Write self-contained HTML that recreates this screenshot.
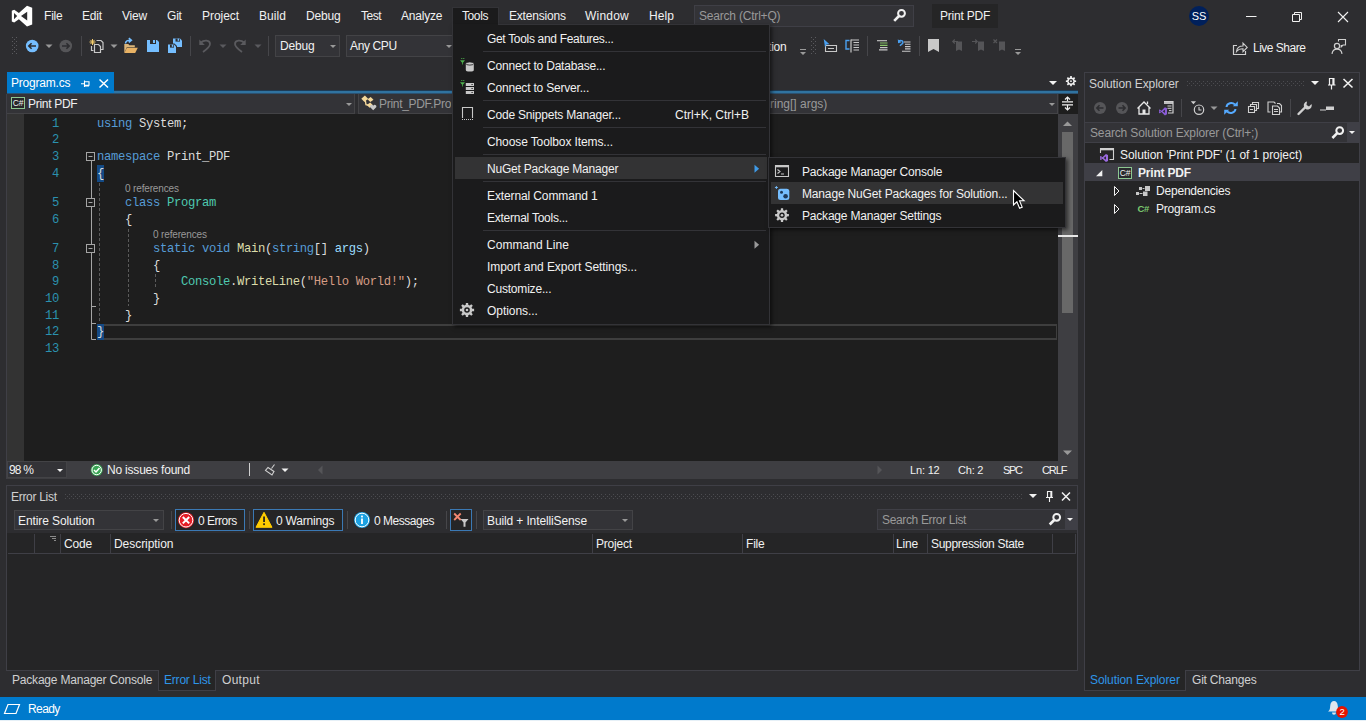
<!DOCTYPE html>
<html><head><meta charset="utf-8"><title>Print PDF - Microsoft Visual Studio</title>
<style>
*{box-sizing:border-box;margin:0;padding:0}
html,body{width:1366px;height:721px;overflow:hidden;background:#2d2d30}
body{position:relative;font-family:"Liberation Sans",sans-serif;font-size:12px;color:#f1f1f1;letter-spacing:-0.2px}
.a{position:absolute}
.t{position:absolute;white-space:nowrap;line-height:16px;height:16px}
svg{position:absolute;overflow:visible}
.mi{position:absolute;top:8px;height:16px;line-height:16px;white-space:nowrap}
.g{color:#999}
.code{position:absolute;font-family:"Liberation Mono",monospace;font-size:12.2px;letter-spacing:-0.32px;line-height:16px;height:16px;white-space:pre;color:#dcdcdc;left:97px}
.ln{position:absolute;font-family:"Liberation Mono",monospace;font-size:12.2px;letter-spacing:-0.32px;line-height:16px;height:16px;width:40px;text-align:right;color:#2b91af;left:19px}
.k{color:#569cd6}.ty{color:#4ec9b0}.s{color:#d69d85}.m{color:#dcdcaa}.p{color:#9cdcfe}
.ref{position:absolute;font-size:10px;line-height:12px;height:12px;color:#999;white-space:nowrap;letter-spacing:-0.15px}
.combo{position:absolute;background:#333337;border:1px solid #434346}
.sep{position:absolute;width:1px;background:#46464a}
.pop{position:absolute;background:#1b1b1c;border:1px solid #333337;box-shadow:2px 2px 4px rgba(0,0,0,.55)}
.pi{position:absolute;left:33px;height:22px;line-height:22px;white-space:nowrap}
.ps{position:absolute;left:29px;right:3px;height:1px;background:#333337}
#toolsmenu>*{margin-top:1px}#toolsmenu .pi{left:34px}#toolsmenu .ps{left:30px}
.hl{position:absolute;background:#333334}
.dd{position:absolute;width:0;height:0;border-left:3px solid transparent;border-right:3px solid transparent;border-top:3px solid #999}
.ddw{border-top-color:#f1f1f1}
.grip{position:absolute;height:5px;background-image:radial-gradient(circle,#46464a 0.6px,transparent 0.9px);background-size:4px 4px}
.th{position:absolute;top:535px;height:19px;line-height:19px;white-space:nowrap}
.cd{position:absolute;top:534px;height:19px;width:1px;background:#3f3f46}
</style></head><body>

<!-- ===== title / menu bar ===== -->
<div id="menubar">
<span class="mi" style="left:44px">File</span>
<span class="mi" style="left:82px">Edit</span>
<span class="mi" style="left:122px">View</span>
<span class="mi" style="left:167px">Git</span>
<span class="mi" style="left:202px;letter-spacing:-0.05px">Project</span>
<span class="mi" style="left:259px;letter-spacing:0.06px">Build</span>
<span class="mi" style="left:306px">Debug</span>
<span class="mi" style="left:361px;letter-spacing:-0.5px">Test</span>
<span class="mi" style="left:401px">Analyze</span>
<span class="mi" style="left:509px">Extensions</span>
<span class="mi" style="left:585px;letter-spacing:0.2px">Window</span>
<span class="mi" style="left:649px;letter-spacing:0.07px">Help</span>
</div>
<!-- search -->
<div class="a" style="left:694px;top:5px;width:220px;height:22px;background:#333337;border:1px solid #3f3f46"></div>
<span class="t g" style="left:699px;top:8px">Search (Ctrl+Q)</span>
<!-- solution name -->
<div class="a" style="left:932px;top:4px;width:66px;height:24px;background:#252526"></div>
<span class="t" style="left:940px;top:8px">Print PDF</span>
<!-- avatar -->
<div class="a" style="left:1189px;top:6px;width:20px;height:20px;border-radius:50%;background:#00205b"></div>
<span class="t" style="left:1190px;top:8px;width:18px;text-align:center;color:#fff;font-size:11px;letter-spacing:0">SS</span>

<!-- ===== toolbar ===== -->
<div class="combo" style="left:275px;top:35px;width:65px;height:22px"></div>
<span class="t" style="left:280px;top:38px">Debug</span>
<div class="dd" style="left:330px;top:45px"></div>
<div class="combo" style="left:346px;top:35px;width:112px;height:22px"></div>
<span class="t" style="left:350px;top:38px;letter-spacing:-0.37px">Any CPU</span>
<div class="dd" style="left:446px;top:45px"></div>
<span class="t" style="left:768px;top:39px">tion</span>
<span class="t" style="left:1253px;top:40px;letter-spacing:-0.5px">Live Share</span>

<!-- ===== document well ===== -->
<div class="a" style="left:7px;top:90px;width:1071px;height:4px;background:linear-gradient(#1d3c56 0,#1d3c56 1px,#3073a0 1px,#3073a0 3px,#2c5170 3px)"></div>
<div class="a" style="left:7px;top:72px;width:107px;height:21px;background:#007acc"></div>
<span class="t" style="left:11px;top:75px;color:#fff">Program.cs</span>
<div class="dd ddw" style="left:1049px;top:81px;border-left-width:4px;border-right-width:4px;border-top-width:4px"></div>

<!-- nav bar -->
<div class="a" style="left:7px;top:94px;width:348px;height:20px;background:#333337;border:1px solid #434346;border-top:none;border-left:none"></div>
<div class="a" style="left:358px;top:94px;width:700px;height:20px;background:#333337;border:1px solid #434346;border-top:none"></div>
<span class="t" style="left:28px;top:96px;letter-spacing:-0.3px">Print PDF</span>
<span class="t g" style="left:379px;top:96px;letter-spacing:-0.3px;width:72px;overflow:hidden">Print_PDF.Program</span>
<span class="t g" style="left:770px;top:96px;letter-spacing:0">ring[] args)</span>
<div class="dd" style="left:346px;top:103px"></div>
<div class="dd" style="left:1049px;top:103px"></div>
<div class="a" style="left:1059px;top:94px;width:19px;height:20px;background:#1e1e1e"></div>

<!-- ===== editor ===== -->
<div class="a" style="left:6px;top:94px;width:1px;height:385px;background:#3f3f46"></div>
<div class="a" style="left:7px;top:114px;width:1051px;height:347px;background:#1e1e1e"></div>
<div class="a" style="left:7px;top:114px;width:17px;height:347px;background:#333333"></div>
<!-- current line -->
<div class="a" style="left:97px;top:324px;width:960px;height:16px;border:2px solid #3e3e3e;border-left:none;border-right-width:1px"></div>
<!-- brace highlights -->
<div class="a" style="left:97px;top:165px;width:7px;height:17px;background:#144a85"></div>
<div class="a" style="left:97px;top:324px;width:7px;height:16px;background:#144a85"></div>

<span class="ln" style="top:116px">1</span>
<span class="ln" style="top:132px">2</span>
<span class="ln" style="top:149px">3</span>
<span class="ln" style="top:166px">4</span>
<span class="ln" style="top:195px">5</span>
<span class="ln" style="top:212px">6</span>
<span class="ln" style="top:241px">7</span>
<span class="ln" style="top:258px">8</span>
<span class="ln" style="top:274px">9</span>
<span class="ln" style="top:291px">10</span>
<span class="ln" style="top:308px">11</span>
<span class="ln" style="top:324px">12</span>
<span class="ln" style="top:341px">13</span>

<span class="code" style="top:116px"><span class="k">using</span> System;</span>
<span class="code" style="top:149px"><span class="k">namespace</span> Print_PDF</span>
<span class="code" style="top:166px">{</span>
<span class="ref" style="left:125px;top:183px">0 references</span>
<span class="code" style="top:195px">    <span class="k">class</span> <span class="ty">Program</span></span>
<span class="code" style="top:212px">    {</span>
<span class="ref" style="left:153px;top:229px">0 references</span>
<span class="code" style="top:241px">        <span class="k">static</span> <span class="k">void</span> <span class="m">Main</span>(<span class="k">string</span>[] <span class="p">args</span>)</span>
<span class="code" style="top:258px">        {</span>
<span class="code" style="top:274px">            <span class="ty">Console</span>.<span class="m">WriteLine</span>(<span class="s">"Hello World!"</span>);</span>
<span class="code" style="top:291px">        }</span>
<span class="code" style="top:308px">    }</span>
<span class="code" style="top:324px">}</span>

<!-- vertical scrollbar -->
<div class="a" style="left:1058px;top:114px;width:20px;height:347px;background:#3e3e42"></div>
<div class="a" style="left:1062px;top:132px;width:11px;height:181px;background:#686868"></div>
<div class="a" style="left:1058px;top:235px;width:20px;height:2px;background:#e8e8e8"></div>

<!-- editor bottom bar -->
<div class="a" style="left:7px;top:461px;width:1071px;height:18px;background:#3e3e42"></div>
<div class="a" style="left:7px;top:461px;width:60px;height:17px;background:#333337;border:1px solid #434346"></div>
<span class="t" style="left:9px;top:462px;letter-spacing:-0.8px">98 %</span>
<div class="dd ddw" style="left:57px;top:469px"></div>
<span class="t" style="left:107px;top:462px">No issues found</span>
<div class="a" style="left:249px;top:463px;width:1px;height:13px;background:#d0d0d0"></div>
<span class="t" style="left:910px;top:462px;font-size:11px;letter-spacing:-0.18px">Ln: 12</span>
<span class="t" style="left:958px;top:462px;font-size:11px;letter-spacing:-0.2px">Ch: 2</span>
<span class="t" style="left:1003px;top:462px;font-size:11px;letter-spacing:-1.3px">SPC</span>
<span class="t" style="left:1042px;top:462px;font-size:11px;letter-spacing:-1.1px">CRLF</span>

<!-- ===== error list ===== -->
<div class="a" style="left:6px;top:485px;width:1072px;height:186px;border:1px solid #3f3f46;background:#2d2d30"></div>
<span class="t" style="left:11px;top:489px;color:#d0d0d0;letter-spacing:-0.3px">Error List</span>
<div class="a" style="left:7px;top:533px;width:1070px;height:137px;background:#252526"></div>

<div class="dd ddw" style="left:1029px;top:494px;border-left-width:4px;border-right-width:4px;border-top-width:4px"></div>
<div class="combo" style="left:14px;top:510px;width:150px;height:20px"></div>
<span class="t" style="left:18px;top:513px;letter-spacing:-0.1px">Entire Solution</span>
<div class="dd" style="left:153px;top:519px"></div>
<div class="sep" style="left:171px;top:511px;height:18px"></div>
<div class="a" style="left:175px;top:509px;width:70px;height:22px;border:1px solid #3b79b4;background:#252526"></div>
<span class="t" style="left:198px;top:513px;letter-spacing:-0.5px">0 Errors</span>
<div class="sep" style="left:249px;top:511px;height:18px"></div>
<div class="a" style="left:253px;top:509px;width:90px;height:22px;border:1px solid #3b79b4;background:#252526"></div>
<span class="t" style="left:276px;top:513px">0 Warnings</span>
<div class="sep" style="left:347px;top:511px;height:18px"></div>
<span class="t" style="left:374px;top:513px;letter-spacing:-0.47px">0 Messages</span>
<div class="sep" style="left:446px;top:511px;height:18px"></div>
<div class="a" style="left:450px;top:509px;width:22px;height:22px;border:1px solid #3b79b4;background:#252526"></div>
<div class="sep" style="left:476px;top:511px;height:18px"></div>
<div class="combo" style="left:483px;top:510px;width:150px;height:20px"></div>
<span class="t" style="left:487px;top:513px;letter-spacing:-0.12px">Build + IntelliSense</span>
<div class="dd" style="left:622px;top:519px"></div>
<div class="combo" style="left:877px;top:509px;width:200px;height:21px;border-color:#3f3f46"></div>
<div class="a" style="left:1065px;top:510px;width:11px;height:19px;background:#3f3f46"></div>
<span class="t g" style="left:882px;top:512px;letter-spacing:-0.35px">Search Error List</span>
<div class="dd ddw" style="left:1067px;top:518px"></div>
<div class="a" style="left:8px;top:553px;width:1068px;height:1px;background:#3f3f46"></div>
<div class="cd" style="left:34px"></div><div class="cd" style="left:60px"></div><div class="cd" style="left:110px"></div>
<div class="cd" style="left:592px"></div><div class="cd" style="left:742px"></div><div class="cd" style="left:893px"></div>
<div class="cd" style="left:927px"></div><div class="cd" style="left:1052px"></div><div class="cd" style="left:1075px"></div>
<span class="th" style="left:64px">Code</span>
<span class="th" style="left:114px;letter-spacing:-0.05px">Description</span>
<span class="th" style="left:596px">Project</span>
<span class="th" style="left:746px">File</span>
<span class="th" style="left:896px">Line</span>
<span class="th" style="left:931px;letter-spacing:-0.3px">Suppression State</span>
<!-- bottom tabs -->
<span class="t" style="left:12px;top:672px;color:#d0d0d0">Package Manager Console</span>
<div class="a" style="left:158px;top:670px;width:58px;height:21px;background:#252526;border:1px solid #3f3f46;border-top:none"></div>
<span class="t" style="left:164px;top:672px;color:#2e95e8">Error List</span>
<span class="t" style="left:222px;top:672px;color:#d0d0d0;letter-spacing:0.3px">Output</span>

<!-- ===== solution explorer ===== -->
<div class="a" style="left:1084px;top:72px;width:276px;height:599px;border:1px solid #3f3f46;background:#252526"></div>
<div class="a" style="left:1085px;top:73px;width:274px;height:70px;background:#2d2d30"></div>
<span class="t" style="left:1089px;top:76px;color:#d0d0d0;letter-spacing:-0.1px">Solution Explorer</span>

<div class="dd ddw" style="left:1311px;top:81px;border-left-width:4px;border-right-width:4px;border-top-width:4px"></div>
<div class="sep" style="left:1181px;top:99px;height:18px"></div>
<div class="sep" style="left:1290px;top:99px;height:18px"></div>
<div class="a" style="left:1085px;top:122px;width:274px;height:21px;background:#333337;border:1px solid #3f3f46;border-left:none;border-right:none"></div>
<div class="a" style="left:1347px;top:123px;width:12px;height:19px;background:#3f3f46"></div>
<span class="t g" style="left:1090px;top:125px;letter-spacing:-0.15px">Search Solution Explorer (Ctrl+;)</span>
<div class="dd ddw" style="left:1349px;top:131px"></div>
<div class="a" style="left:1085px;top:163px;width:274px;height:18px;background:#3f3f46"></div>
<span class="t" style="left:1120px;top:147px;letter-spacing:-0.05px">Solution 'Print PDF' (1 of 1 project)</span>
<span class="t" style="left:1138px;top:165px;font-weight:bold">Print PDF</span>
<span class="t" style="left:1156px;top:183px">Dependencies</span>
<span class="t" style="left:1156px;top:201px">Program.cs</span>
<!-- sol tabs -->
<div class="a" style="left:1084px;top:670px;width:102px;height:21px;background:#252526;border:1px solid #3f3f46;border-top:none"></div>
<span class="t" style="left:1090px;top:672px;color:#2e95e8;letter-spacing:-0.09px">Solution Explorer</span>
<span class="t" style="left:1192px;top:672px;color:#d0d0d0">Git Changes</span>

<!-- status bar -->
<div class="a" style="left:0;top:697px;width:1366px;height:23px;background:#007acc"></div>
<div class="a" style="left:0;top:720px;width:1366px;height:1px;background:#e6f0f7"></div>
<span class="t" style="left:28px;top:701px;color:#fff;letter-spacing:-0.6px">Ready</span>

<!-- ===== icons layer 1 (below popups) ===== -->
<svg id="ic1" style="left:0;top:0" width="1366" height="721" viewBox="0 0 1366 721" fill="none">
<defs>
<pattern id="gp1" width="4" height="4" patternUnits="userSpaceOnUse" x="65" y="494"><rect x="0" y="0" width="1" height="1" fill="#4c4c50"/><rect x="2" y="2" width="1" height="1" fill="#4c4c50"/></pattern>
<pattern id="gp2" width="4" height="4" patternUnits="userSpaceOnUse" x="1187" y="81"><rect x="0" y="0" width="1" height="1" fill="#4c4c50"/><rect x="2" y="2" width="1" height="1" fill="#4c4c50"/></pattern>
</defs>
<rect x="65" y="494" width="957" height="5" fill="url(#gp1)"/>
<rect x="1187" y="81" width="117" height="5" fill="url(#gp2)"/>
<!-- VS logo -->
<path transform="translate(12 6)" fill="#fff" fill-rule="evenodd" d="M15 -0.200 L20.200 1.800 V18.400 L15 20.400 L6.900 13.300 L2.200 16.400 L-0.200 15.400 V4.800 L2.200 3.800 L6.900 6.900 Z M15.200 5.800 V14.400 L9 10.100 Z M2 7 V13.200 L5.200 10.100 Z"/>
<!-- toolbar grip -->
<g fill="#5a5a5e">
<rect x="12" y="37" width="1" height="1"/><rect x="12" y="41" width="1" height="1"/><rect x="12" y="45" width="1" height="1"/><rect x="12" y="49" width="1" height="1"/><rect x="12" y="53" width="1" height="1"/>
<rect x="14" y="39" width="1" height="1"/><rect x="14" y="43" width="1" height="1"/><rect x="14" y="47" width="1" height="1"/><rect x="14" y="51" width="1" height="1"/>
<rect x="16" y="37" width="1" height="1"/><rect x="16" y="41" width="1" height="1"/><rect x="16" y="45" width="1" height="1"/><rect x="16" y="49" width="1" height="1"/><rect x="16" y="53" width="1" height="1"/>
<rect x="811" y="37" width="1" height="1"/><rect x="811" y="41" width="1" height="1"/><rect x="811" y="45" width="1" height="1"/><rect x="811" y="49" width="1" height="1"/><rect x="811" y="53" width="1" height="1"/>
<rect x="813" y="39" width="1" height="1"/><rect x="813" y="43" width="1" height="1"/><rect x="813" y="47" width="1" height="1"/><rect x="813" y="51" width="1" height="1"/>
<rect x="815" y="37" width="1" height="1"/><rect x="815" y="41" width="1" height="1"/><rect x="815" y="45" width="1" height="1"/><rect x="815" y="49" width="1" height="1"/><rect x="815" y="53" width="1" height="1"/>
</g>
<!-- back / forward -->
<circle cx="32.2" cy="46" r="6.3" fill="#75beff"/>
<path d="M36 46 H29 M31.6 43.2 L28.8 46 L31.6 48.8" stroke="#2d2d30" stroke-width="1.6"/>
<path d="M45.5 44.5 h7 l-3.5 3.5 z" fill="#999"/>
<circle cx="65.8" cy="46" r="6.3" fill="#555558"/>
<path d="M62 46 H69 M66.4 43.2 L69.2 46 L66.4 48.8" stroke="#2d2d30" stroke-width="1.6"/>
<rect x="81" y="36" width="1" height="20" fill="#46464a"/>
<!-- new item -->
<path d="M96.5 40.5 h4.5 l2 2 v7 h-2" stroke="#c8c8c8" stroke-width="1.2"/>
<path d="M94.5 44.5 h4 l2 2 v6 h-6 z" stroke="#c8c8c8" stroke-width="1.2"/>
<path d="M91.5 46 v4.5 h2" stroke="#c8c8c8" stroke-width="1.2"/>
<path d="M92.5 39 v6 M89.5 42 h6 M90.4 39.9 l4.2 4.2 M94.6 39.9 l-4.2 4.2" stroke="#f5cd6c" stroke-width="1"/>
<path d="M110.5 44.5 h7 l-3.5 3.5 z" fill="#999"/>
<!-- open -->
<path d="M124.3 53 V44 h4 l1 1.2 h5.5 v2 h-8 l-2.5 5.8 z" fill="#dcb67a"/>
<path d="M124.3 53 l2.6 -5.3 h10.9 l-2.6 5.3 z" fill="#e8b264"/>
<path d="M125.5 43.5 c0 -2.5 2 -3.2 5 -3.2 M128.8 38.2 l2.6 2.1 l-2.6 2.1" stroke="#75beff" stroke-width="1.5"/>
<!-- save -->
<path d="M147 40 h10 l2 2 v10 h-12 z" fill="#75beff"/>
<rect x="150" y="40" width="6" height="4" fill="#2d2d30"/><rect x="153" y="40" width="2" height="3" fill="#75beff"/>
<!-- save all -->
<path d="M173 38.6 h7 l2 2 v6.4 h-9 z" fill="#75beff"/>
<rect x="175.5" y="38.6" width="4.5" height="3" fill="#2d2d30"/><rect x="177.6" y="38.6" width="1.6" height="2.2" fill="#75beff"/>
<path d="M167 43.6 h7.5 l2.5 2.5 v7 h-10 z" fill="#2d2d30"/>
<path d="M168 44.6 h6 l2 2 v6.4 h-8 z" fill="#75beff"/>
<rect x="170" y="44.6" width="4" height="3" fill="#2d2d30"/><rect x="171.8" y="44.6" width="1.5" height="2.2" fill="#75beff"/>
<rect x="190" y="36" width="1" height="20" fill="#46464a"/>
<!-- undo / redo -->
<path d="M203 52 c3.5 -2.5 7 -5 7 -8 c0 -4 -6 -4.5 -9 -1.5" stroke="#5a5a5e" stroke-width="1.8"/>
<path d="M199.3 39.5 v5.5 h5.5 z" fill="#5a5a5e"/>
<path d="M219.5 44.5 h7 l-3.5 3.5 z" fill="#5a5a5e"/>
<path d="M242 52 c-3.5 -2.5 -7 -5 -7 -8 c0 -4 6 -4.5 9 -1.5" stroke="#5a5a5e" stroke-width="1.8"/>
<path d="M245.7 39.5 v5.5 h-5.5 z" fill="#5a5a5e"/>
<path d="M254.5 44.5 h7 l-3.5 3.5 z" fill="#5a5a5e"/>
<rect x="268" y="36" width="1" height="20" fill="#46464a"/>
<!-- overflow arrows -->
<path d="M800 49 h6 v1 h-6z M800 52 h6 l-3 3 z" fill="#999"/>
<path d="M1015 49 h6 v1 h-6z M1015 52 h6 l-3 3 z" fill="#999"/>
<!-- cursor + box -->
<path d="M825.5 45.5 h11 v6 h-11 z M828 48.5 h6" stroke="#c8c8c8" stroke-width="1.1"/>
<path d="M823.7 39 l5.8 5.3 l-3 .3 l-1.4 2.8 z" fill="#4aa0f0"/>
<!-- format doc -->
<path d="M849.5 40.5 h-3.5 v8.5 h3.5" stroke="#4aa0f0" stroke-width="1.4"/>
<path d="M851 39.5 v13" stroke="#c8c8c8" stroke-width="1.2"/>
<path d="M851 40 h8 M853.5 42.5 h5.5 M853.5 45 h5.5 M853.5 47.5 h5.5 M853.5 50 h5.5" stroke="#c8c8c8" stroke-width="1.1"/>
<rect x="867" y="36" width="1" height="20" fill="#46464a"/>
<!-- comment -->
<path d="M877 40.7 h10" stroke="#c8c8c8" stroke-width="1.1"/>
<path d="M880 43 h7.5 M880 45.3 h7.5" stroke="#8bc56a" stroke-width="1.2"/>
<path d="M880 47.6 h7.5 M879 49.9 h8.5" stroke="#c8c8c8" stroke-width="1.1"/>
<!-- uncomment -->
<path d="M898.5 41 c3 -1.500 5.500 0.500 4 2.600 l-2.600 2.200" stroke="#4aa0f0" stroke-width="1.5"/>
<path d="M897.800 39.300 l0.300 4 l3.500 -1 z" fill="#4aa0f0"/>
<path d="M904 42 h6.500 M905 44.300 h5.500 M905 46.600 h5.500 M905 48.900 h5.500 M902 51.200 h8.500" stroke="#c8c8c8" stroke-width="1.1"/>
<rect x="919" y="36" width="1" height="20" fill="#46464a"/>
<!-- bookmarks -->
<path d="M928 39 h11 v13 l-5.500 -3 l-5.500 3 z" fill="#c8c8c8"/>
<g fill="#555558">
<path d="M956 41.500 h6 v9.500 l-3 -1.600 l-3 1.600 z"/>
<path d="M978 41.500 h6 v9.500 l-3 -1.600 l-3 1.600 z"/>
<path d="M999 41.500 h6 v9.500 l-3 -1.600 l-3 1.600 z"/>
</g>
<path d="M958 41.500 h-5 M954.800 39.500 l-2 2 l2 2" stroke="#555558" stroke-width="1.200"/>
<path d="M972 41.500 h5 M975.200 39.500 l2 2 l-2 2" stroke="#555558" stroke-width="1.200"/>
<path d="M993.500 39.500 l3.500 3.500 M997 39.500 l-3.500 3.500" stroke="#555558" stroke-width="1.200"/>

<!-- search magnifier (title) -->
<circle cx="901.5" cy="13.3" r="3.4" stroke="#f1f1f1" stroke-width="2"/><path d="M899 16 l-4.800 4.800" stroke="#f1f1f1" stroke-width="2.600"/>
<!-- window buttons -->
<path d="M1246 16.500 h10.500" stroke="#f1f1f1" stroke-width="1"/>
<path d="M1292.500 14.500 h7 v7 h-7 z M1294.500 14.500 v-2 h7 v7 h-2" stroke="#f1f1f1" stroke-width="1"/>
<path d="M1338 12 l10 10 M1348 12 l-10 10" stroke="#f1f1f1" stroke-width="1.100"/>
<!-- live share -->
<path d="M1237 45.500 h-3.500 v9 h12 v-3.500" stroke="#d0d0d0" stroke-width="1.200"/>
<path d="M1236.500 51.500 c0.500 -4 3 -5.500 6.500 -5.500 v-2.800 l4.200 4.200 l-4.200 4.200 v-2.800 c-3 0 -4.800 0.500 -6.500 2.700 z" stroke="#d0d0d0" stroke-width="1.100"/>
<!-- feedback -->
<circle cx="1337" cy="46" r="2.600" stroke="#d0d0d0" stroke-width="1.200"/>
<path d="M1332 53.800 c0.500 -3.500 2.500 -4.600 5 -4.600 c2.500 0 4.500 1.100 5 4.600" stroke="#d0d0d0" stroke-width="1.200"/>
<path d="M1338.500 41.500 v-2 h7 v5.500 h-2.500 l-1.800 1.800 v-1.800" stroke="#d0d0d0" stroke-width="1.100"/>
<!-- tab pin / close -->
<path d="M81 83.800 h3.500 M84.500 80.500 v6.500 M84.500 81.800 h4.500 v3.500 h-4.500 M84.500 86 h4.500" stroke="#fff" stroke-width="1.100"/>
<path d="M99.500 79.500 l8.500 8 M108 79.500 l-8.500 8" stroke="#fff" stroke-width="1.500"/>
<!-- doc well gear -->
<path d="M1070.19 76.06 L1071.81 76.06 L1071.90 77.46 L1073.01 77.92 L1074.06 76.99 L1075.21 78.14 L1074.28 79.19 L1074.74 80.30 L1076.14 80.39 L1076.14 82.01 L1074.74 82.10 L1074.28 83.21 L1075.21 84.26 L1074.06 85.41 L1073.01 84.48 L1071.90 84.94 L1071.81 86.34 L1070.19 86.34 L1070.10 84.94 L1068.99 84.48 L1067.94 85.41 L1066.79 84.26 L1067.72 83.21 L1067.26 82.10 L1065.86 82.01 L1065.86 80.39 L1067.26 80.30 L1067.72 79.19 L1066.79 78.14 L1067.94 76.99 L1068.99 77.92 L1070.10 77.46 Z" fill="#f1f1f1"/><circle cx="1071" cy="81.2" r="2.29" fill="#2d2d30"/><circle cx="1071" cy="81.2" r="0.88" fill="#f1f1f1"/>
<!-- nav bar icons -->
<rect x="11.500" y="97.500" width="13" height="11" stroke="#8dc891" stroke-width="1" fill="#27272a"/>
<text x="18" y="105.800" font-family="Liberation Sans, sans-serif" font-size="8.500" fill="#f0f0f0" text-anchor="middle" letter-spacing="-0.2">C#</text>
<path d="M361.300 98.800 l3.600 -3.200 l3.200 3.200 l-3.600 3.200 z M367.500 99.300 l3.200 -2.300 l2.800 2.800 l-3.200 2.300 z M366.800 105 l3.400 -2.600 l2.800 2.800 l-3.400 2.600 z" fill="#f5d89a"/>
<path d="M365.300 100.500 l0.700 4.200 l3 0.600" stroke="#f5d89a" stroke-width="1.400"/>
<path d="M373.200 110.300 l-3 -3 a1.600 1.600 0 0 1 3 -1.600 a1.600 1.600 0 0 1 3 1.600 z" fill="#c8c8c8"/>
<!-- splitter -->
<path d="M1062 101.800 h11 M1062 104.800 h11 M1067.500 101 v-3.500 M1067.500 105.500 v3.500" stroke="#f1f1f1" stroke-width="1.200"/>
<path d="M1065 99.500 l2.500 -2.500 l2.500 2.500 M1065 107.500 l2.500 2.500 l2.500 -2.500" stroke="#f1f1f1" stroke-width="1.200"/>
<!-- scrollbar arrows -->
<path d="M1063 126 h9 l-4.500 -4.500 z" fill="#999"/>
<path d="M1063 450.500 h9 l-4.500 4.500 z" fill="#999"/>
<!-- outlining -->
<g stroke="#a5a5a5" stroke-width="1">
<path d="M91.500 161 V339.500 H96"/>
<path d="M91.500 323.500 H96"/><path d="M91.500 306.500 H96"/>
<path d="M90.500 294.500 H95" opacity="0"/>
<rect x="86.500" y="152.500" width="8" height="8" fill="#1e1e1e"/><path d="M88.500 156.500 h4"/>
<rect x="86.500" y="198.500" width="8" height="8" fill="#1e1e1e"/><path d="M88.500 202.500 h4"/>
<rect x="86.500" y="244.500" width="8" height="8" fill="#1e1e1e"/><path d="M88.500 248.500 h4"/>
</g>
<g stroke="#5a5a5a" stroke-width="1" stroke-dasharray="3 2">
<path d="M99.500 183 V323"/><path d="M128.500 229 V306"/><path d="M155.500 274 V289"/>
</g>
<!-- bottom bar icons -->
<circle cx="96.700" cy="470" r="6" fill="#3aa655"/><circle cx="96.700" cy="470" r="4.700" stroke="#fff" stroke-width="1" fill="none"/>
<path d="M94 470 l2 2 l3.500 -4" stroke="#fff" stroke-width="1.500"/>
<path d="M274.500 464.500 l-3 4 M268 467.500 l6 4 l-2 3.500 l-6.500 -4.500 z" stroke="#d0d0d0" stroke-width="1.100"/>
<path d="M281.500 468.500 h7 l-3.500 3.500 z" fill="#f1f1f1"/>
<path d="M322.500 465.500 v9 l-4.500 -4.500 z" fill="#555558"/>
<path d="M877.500 465.500 v9 l4.500 -4.500 z" fill="#555558"/>
<!-- error list window buttons -->
<path d="M1047.500 497 v-5.500 h3.500 v5.500 M1046 497.500 h7 M1049.500 498 v4" stroke="#f1f1f1" stroke-width="1.100"/><path d="M1051.500 491 v6.500" stroke="#f1f1f1" stroke-width="1.600"/>
<path d="M1062 492.500 l8 8 M1070 492.500 l-8 8" stroke="#f1f1f1" stroke-width="1.500"/>
<!-- error icon -->
<circle cx="186" cy="520.200" r="8" fill="#e41e26"/><circle cx="186" cy="520.200" r="6.800" stroke="#fff" stroke-width="1" fill="none"/>
<path d="M182.800 517 l6.400 6.400 M189.200 517 l-6.400 6.400" stroke="#fff" stroke-width="2"/>
<!-- warning icon -->
<path d="M264 512.300 l8 15 h-16 z" fill="#ffcc00" stroke="#ffcc00" stroke-width="1" stroke-linejoin="round"/>
<rect x="263.200" y="516.500" width="1.700" height="5.500" fill="#1e1e1e"/><rect x="263.200" y="523.300" width="1.700" height="1.800" fill="#1e1e1e"/>
<!-- info icon -->
<circle cx="362" cy="520" r="8" fill="#1ba1e2"/><circle cx="362" cy="520" r="6.800" stroke="#fff" stroke-width="1" fill="none"/>
<rect x="361.100" y="518.500" width="1.800" height="5.500" fill="#fff"/><rect x="361.100" y="515.600" width="1.800" height="1.800" fill="#fff"/>
<!-- filter icon -->
<path d="M454.200 513.500 l6.500 6.500 M460.700 513.500 l-6.500 6.500" stroke="#f48771" stroke-width="1.800"/>
<path d="M460.500 519 h8 l-3 3.500 v4.300 h-2 v-4.300 z" fill="#c8c8c8"/>
<!-- error search magnifier -->
<circle cx="1056.700" cy="517.300" r="3.400" stroke="#f1f1f1" stroke-width="2"/><path d="M1054.200 520 l-4.500 4.500" stroke="#f1f1f1" stroke-width="2.600"/>
<!-- header sort glyph -->
<path d="M50 536.500 h6 M52 538.500 h4 M54 540.500 h2" stroke="#8a8a8a" stroke-width="1"/>
<!-- solution explorer window buttons -->
<path d="M1329.500 84.500 v-6 h3.500 v6 M1328 85 h7.500 M1331.500 85.500 v4" stroke="#f1f1f1" stroke-width="1.200"/><path d="M1333.700 78 v7" stroke="#f1f1f1" stroke-width="1.700"/>
<path d="M1343.500 79 l9 8.500 M1352.500 79 l-9 8.500" stroke="#f1f1f1" stroke-width="1.600"/>
<!-- SE toolbar -->
<circle cx="1100" cy="108" r="6" fill="#555558"/><path d="M1103.500 108 H1097 M1099.500 105.300 L1096.800 108 L1099.500 110.700" stroke="#2d2d30" stroke-width="1.500"/>
<circle cx="1122" cy="108" r="6" fill="#555558"/><path d="M1118.500 108 H1125 M1122.500 105.300 L1125.200 108 L1122.500 110.700" stroke="#2d2d30" stroke-width="1.500"/>
<path d="M1137.500 108.500 l6.500 -6.500 l6.500 6.500 M1139 107.500 v6.500 h10 v-6.500 M1147.500 104 v-2.500" stroke="#e8e8e8" stroke-width="1.300"/>
<rect x="1142.500" y="109.500" width="3" height="4.500" fill="#e8e8e8"/>
<path d="M1164 101.500 h9 v11.500 h-5" stroke="#d0d0d0" stroke-width="1.200"/>
<path d="M1164 103 h9" stroke="#d0d0d0" stroke-width="1.800"/>
<path d="M1167.500 106 h4 M1167.500 108.300 h4 M1169 110.600 h2.500" stroke="#d0d0d0" stroke-width="1"/>
<path transform="translate(1159 107.300) scale(0.4)" fill="#8a5cd6" fill-rule="evenodd" d="M14.800 0 L20 2.600 V17.600 L14.800 20.300 L6.200 11.900 L2.100 15 L0 14 V6.300 L2.100 5.300 L6.200 8.400 Z M14.800 5.900 L9.300 10.150 L14.800 14.400 Z M2 7.900 L4.400 10.150 L2 12.400 Z"/>
<circle cx="1199" cy="109.700" r="4.700" stroke="#d0d0d0" stroke-width="1.200"/><path d="M1199 107 v3 h2.500" stroke="#d0d0d0" stroke-width="1.100"/>
<path d="M1190.800 101.200 h5.200 l-2.600 3 z" fill="#d0d0d0"/>
<path d="M1210.500 106.500 h7 l-3.500 3.500 z" fill="#999"/>
<path d="M1226.500 107 c0.500 -4 5.500 -5 8.500 -2.500 M1235.500 109 c-0.500 4 -5.500 5 -8.500 2.500" stroke="#55aaff" stroke-width="2"/>
<path d="M1237.800 101.300 v5 h-5 z M1224.200 114.700 v-5 h5 z" fill="#55aaff"/>
<path d="M1248.500 106.500 h6 v6 h-6 z M1250 109.500 h3 M1250.500 106.500 v-2 h6 v6 h-2 M1252.500 104.500 v-2 h6 v6 h-2" stroke="#d0d0d0" stroke-width="1.100"/>
<path d="M1272.500 106 h5 l2 2 v6.500 h-7 z M1274 109.500 h4 M1274 111.500 h4 M1270.500 112 h-2.500 v-10 h6 l1.500 1.500 M1277 103.500 h2.500 l2 2 v6.500 h-1.500" stroke="#d0d0d0" stroke-width="1.100"/>
<path d="M1298.500 114 l7 -7" stroke="#d0d0d0" stroke-width="2.400" stroke-linecap="round"/>
<path d="M1311.500 104 a4 4 0 1 1 -4.500 -2.500 l-0.500 3.500 l2.500 1.500 z" fill="#d0d0d0"/>
<path d="M1320 110 h6 M1326 108.500 h8" stroke="#d0d0d0" stroke-width="1"/><rect x="1326" y="106.500" width="8" height="3.500" fill="#d0d0d0"/>
<!-- SE search magnifier -->
<circle cx="1339.700" cy="130.600" r="3.400" stroke="#f1f1f1" stroke-width="2"/><path d="M1337.200 133.200 l-4.800 4.800" stroke="#f1f1f1" stroke-width="2.600"/>
<!-- tree icons -->
<path d="M1100.500 153 v-4.500 h13 v11 h-4" stroke="#d0d0d0" stroke-width="1.100"/><path d="M1100.500 149.300 h13" stroke="#d0d0d0" stroke-width="2"/>
<path transform="translate(1100 154) scale(0.4)" fill="#9b6be0" fill-rule="evenodd" d="M14.800 0 L20 2.600 V17.600 L14.800 20.300 L6.200 11.900 L2.100 15 L0 14 V6.300 L2.100 5.300 L6.200 8.400 Z M14.800 5.900 L9.300 10.150 L14.800 14.400 Z M2 7.900 L4.400 10.150 L2 12.400 Z"/>
<path d="M1102.300 170 v6.300 h-6.300 z" fill="#f1f1f1"/>
<rect x="1118.500" y="167.500" width="13" height="11" stroke="#8dc891" stroke-width="1" fill="#2a2a2e"/>
<text x="1125" y="175.800" font-family="Liberation Sans, sans-serif" font-size="8.500" fill="#f0f0f0" text-anchor="middle" letter-spacing="-0.2">C#</text>
<path d="M1114.500 186.500 v9 l4.500 -4.500 z" stroke="#f1f1f1" stroke-width="1"/>
<path d="M1114.500 204.500 v9 l4.500 -4.500 z" stroke="#f1f1f1" stroke-width="1"/>
<g fill="#c8c8c8"><rect x="1139" y="187" width="3" height="3"/><rect x="1145" y="186" width="5" height="5"/><rect x="1136" y="192" width="3" height="3"/><rect x="1143" y="191.500" width="4.500" height="4.500"/><rect x="1142.500" y="188" width="2" height="1"/><rect x="1139.500" y="193" width="3" height="1"/></g>
<text x="1137.600" y="212.200" font-family="Liberation Sans, sans-serif" font-size="9.500" font-weight="bold" fill="#7bc96f" letter-spacing="-0.5">C#</text>
<!-- status bar icons -->
<path d="M8 704.500 h11.500 l-3.500 9 h-11.500 z" stroke="#fff" stroke-width="1.200"/>
<path d="M1328 711.500 c2 -1.200 2 -3 2.200 -5.500 c0.200 -3.200 1.800 -5 3.800 -5 c2 0 3.600 1.800 3.800 5 c0.200 2.500 0.200 4.300 2.200 5.500 z" fill="#dfe6ee"/>
<path d="M1332 712.500 a2 2.200 0 0 0 4 0 z" fill="#dfe6ee"/>
<circle cx="1342" cy="712" r="5.900" fill="#e51400"/>
<text x="1342" y="715.300" font-family="Liberation Sans, sans-serif" font-size="9.500" fill="#fff" text-anchor="middle">2</text>
</svg>

<!-- ===== Tools menu popup ===== -->
<div class="a" style="left:452px;top:7px;width:47px;height:18px;background:#1b1b1c;border:1px solid #333337;border-bottom:none"></div>
<span class="mi" style="left:462px;letter-spacing:-0.4px">Tools</span>
<div class="pop" id="toolsmenu" style="left:452px;top:24px;width:318px;height:301px">
<div class="hl" style="left:2px;top:131px;width:312px;height:22px"></div>
<span class="pi" style="top:2px;letter-spacing:-0.32px">Get Tools and Features...</span>
<div class="ps" style="top:25px"></div>
<span class="pi" style="top:29px">Connect to Database...</span>
<span class="pi" style="top:51px">Connect to Server...</span>
<div class="ps" style="top:74px"></div>
<span class="pi" style="top:78px">Code Snippets Manager...</span>
<span class="pi" style="top:78px;left:222px !important;letter-spacing:0px">Ctrl+K, Ctrl+B</span>
<div class="ps" style="top:101px"></div>
<span class="pi" style="top:105px;letter-spacing:-0.11px">Choose Toolbox Items...</span>
<div class="ps" style="top:128px"></div>
<span class="pi" style="top:132px">NuGet Package Manager</span>
<div class="ps" style="top:155px"></div>
<span class="pi" style="top:159px;letter-spacing:-0.12px">External Command 1</span>
<span class="pi" style="top:181px;letter-spacing:-0.25px">External Tools...</span>
<div class="ps" style="top:204px"></div>
<span class="pi" style="top:208px;letter-spacing:0.05px">Command Line</span>
<span class="pi" style="top:230px;letter-spacing:-0.07px">Import and Export Settings...</span>
<span class="pi" style="top:252px">Customize...</span>
<span class="pi" style="top:274px;letter-spacing:-0.06px">Options...</span>
</div>
<div class="pop" id="nugetmenu" style="left:768px;top:157px;width:298px;height:71px">
<div class="hl" style="left:2px;top:24px;width:292px;height:22px"></div>
<span class="pi" style="top:3px">Package Manager Console</span>
<span class="pi" style="top:25px;letter-spacing:-0.16px">Manage NuGet Packages for Solution...</span>
<span class="pi" style="top:47px">Package Manager Settings</span>
</div>
<div class="a" style="left:453px;top:24px;width:45px;height:1px;background:#1b1b1c"></div>

<!-- ===== icons layer 2 (popup icons, cursor) ===== -->
<svg id="ic2" style="left:0;top:0" width="1366" height="721" viewBox="0 0 1366 721" fill="none">
<!-- connect db -->
<path d="M460 60.300 h5 l-2.500 3 z M461.300 58 h1 v1 h-1 z M463.300 58 h1 v1 h-1 z M462.200 63 h0.800 v1.500 h-0.800 z" fill="#4db04d"/>
<path d="M465.800 63.500 v6.500 a4 1.600 0 0 0 8 0 v-6.500 z" fill="#c8c8c8"/><ellipse cx="469.800" cy="63.500" rx="4" ry="1.600" fill="#c8c8c8" stroke="#1b1b1c" stroke-width="0.800"/>
<path d="M460 82.300 h5 l-2.500 3 z M461.300 80 h1 v1 h-1 z M463.300 80 h1 v1 h-1 z M462.200 85 h0.800 v1.500 h-0.800 z" fill="#4db04d"/>
<g fill="#c8c8c8"><rect x="465.800" y="83" width="8.200" height="3"/><rect x="465.800" y="87" width="8.200" height="3"/><rect x="465.800" y="91" width="8.200" height="3"/></g>
<g fill="#1b1b1c"><rect x="471.500" y="84" width="1.200" height="1"/><rect x="471.500" y="88" width="1.200" height="1"/><rect x="471.500" y="92" width="1.200" height="1"/></g>
<!-- code snippets -->
<path d="M462.500 118 v-10.500 h10 v10.500" stroke="#c8c8c8" stroke-width="1.100"/>
<path d="M462 119.500 h11" stroke="#c8c8c8" stroke-width="1" stroke-dasharray="1 1"/>
<!-- submenu arrows -->
<path d="M754.500 164.800 v8 l4.600 -4 z" fill="#3f9ae6"/>
<path d="M754.500 240.800 v8 l4.600 -4 z" fill="#999"/>
<!-- options gear -->
<path d="M465.87 302.89 L468.13 302.89 L468.24 304.82 L469.78 305.46 L471.23 304.18 L472.82 305.77 L471.54 307.22 L472.18 308.76 L474.11 308.87 L474.11 311.13 L472.18 311.24 L471.54 312.78 L472.82 314.23 L471.23 315.82 L469.78 314.54 L468.24 315.18 L468.13 317.11 L465.87 317.11 L465.76 315.18 L464.22 314.54 L462.77 315.82 L461.18 314.23 L462.46 312.78 L461.82 311.24 L459.89 311.13 L459.89 308.87 L461.82 308.76 L462.46 307.22 L461.18 305.77 L462.77 304.18 L464.22 305.46 L465.76 304.82 Z" fill="#c8c8c8"/><circle cx="467" cy="310" r="2.8" fill="#1b1b1c"/><circle cx="467" cy="310" r="1.3" fill="#c8c8c8"/>
<!-- console icon -->
<path d="M775.500 165.500 h13 v11 h-13 z" stroke="#c8c8c8" stroke-width="1.100"/><path d="M775.500 166.300 h13" stroke="#c8c8c8" stroke-width="2"/>
<path d="M777.500 169.500 l2.500 2 l-2.500 2 M781 174 h3" stroke="#c8c8c8" stroke-width="1.100"/>
<!-- nuget icon -->
<rect x="778" y="188.800" width="11.300" height="11.300" rx="2.500" fill="#75beff"/>
<circle cx="781.500" cy="192.300" r="1.500" fill="#1e3a5a"/><circle cx="785.600" cy="196.300" r="2.300" fill="#1e3a5a"/>
<path d="M776.400 186 v3 M774.900 187.500 h3" stroke="#75beff" stroke-width="0.900"/>
<path d="M780.90 208.29 L783.10 208.29 L783.21 210.16 L784.71 210.78 L786.11 209.54 L787.66 211.09 L786.42 212.49 L787.04 213.99 L788.91 214.10 L788.91 216.30 L787.04 216.41 L786.42 217.91 L787.66 219.31 L786.11 220.86 L784.71 219.62 L783.21 220.24 L783.10 222.11 L780.90 222.11 L780.79 220.24 L779.29 219.62 L777.89 220.86 L776.34 219.31 L777.58 217.91 L776.96 216.41 L775.09 216.30 L775.09 214.10 L776.96 213.99 L777.58 212.49 L776.34 211.09 L777.89 209.54 L779.29 210.78 L780.79 210.16 Z" fill="#c8c8c8"/><circle cx="782" cy="215.2" r="2.7" fill="#1b1b1c"/><circle cx="782" cy="215.2" r="1.3" fill="#c8c8c8"/>
<!-- mouse cursor -->
<path d="M1013.500 190.500 v14.500 l3.400 -3.200 l2.700 6.400 l2.600 -1.100 l-2.700 -6.300 h4.600 z" fill="#000" stroke="#fff" stroke-width="1.100" stroke-linejoin="miter"/>
</svg>

</body></html>
